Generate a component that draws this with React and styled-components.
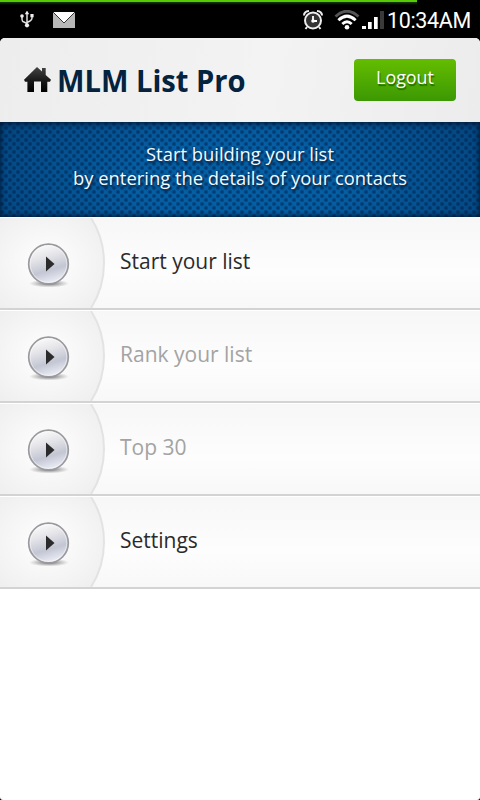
import React from 'react';
import styled, { createGlobalStyle } from 'styled-components';

const GlobalStyle = createGlobalStyle`
  * {
    box-sizing: border-box;
  }
  body {
    margin: 0;
    background: #000;
    font-family: "Open Sans", "Noto Sans", sans-serif;
  }
`;

const Phone = styled.div`
  width: 480px;
  height: 800px;
  display: flex;
  flex-direction: column;
  background: #000;
  overflow: hidden;
`;

// barra de estado
const Progress = styled.div`
  width: 417px;
  height: 5px;
  background: linear-gradient(#57cb05 0 2px, #173d00 2px, #000 5px);
`;

const StatusBar = styled.div`
  height: 33px;
  display: flex;
  align-items: center;
  padding: 0 9px 3px 19px;
  color: #fff;
`;

const StatusSpace = styled.div`
  flex: 1;
`;

const StatusIcon = styled.svg`
  flex: none;
  margin-left: ${(props) => props.$left || 0}px;
`;

const Clock = styled.span`
  margin: 2px 0 0 3px;
  width: 84px;
  font-family: Roboto, sans-serif;
  font-size: 21.5px;
  line-height: 30px;
  letter-spacing: -0.35px;
  white-space: nowrap;
`;

const Screen = styled.main`
  flex: 1;
  border-radius: 5px 5px 3px 3px;
  background: #fff;
  overflow: hidden;
`;

const Header = styled.header`
  height: 84px;
  display: flex;
  align-items: center;
  padding: 0 24px 0 23px;
  background: linear-gradient(100deg, #ededed, #f3f3f4 55%, #ececec);
`;

// texto estrechado, con el ancho de una letra condensada
const Narrow = styled.span`
  display: block;
  white-space: nowrap;
  transform: scaleX(${(props) => props.$scale});
  transform-origin: ${(props) => props.$origin || 'left'} center;
`;

const Title = styled.h1`
  flex: 1;
  margin: 0 0 1px 5px;
  font-size: 31px;
  line-height: 40px;
  font-weight: 700;
  color: #03233f;
`;

const LogoutButton = styled.button`
  width: 102px;
  height: 42px;
  border: 0;
  border-radius: 4px;
  padding: 0 0 7px;
  background: linear-gradient(#64bd00, #3c9803);
  color: #fff;
  font-family: inherit;
  font-size: 19px;
  text-shadow: 1px 2px 1px #246800;
`;

const Banner = styled.section`
  height: 95px;
  padding-top: 20px;
  text-align: center;
  color: #f4faff;
  font-size: 18.4px;
  line-height: 24px;
  text-shadow: 1px 2px 2px #00203f;
  box-shadow: inset 0 2px 5px rgba(0, 22, 48, 0.8), inset 0 -2px 4px rgba(0, 22, 48, 0.65);
  background:
    radial-gradient(ellipse 62% 120% at 50% 60%, transparent 35%, rgba(0, 25, 62, 0.42) 100%),
    radial-gradient(circle at 2px 2px, rgba(0, 34, 78, 0.62) 0.6px, transparent 2.8px) 0 0 / 8px 8px,
    radial-gradient(circle at 6px 6px, rgba(0, 34, 78, 0.62) 0.6px, transparent 2.8px) 0 0 / 8px 8px,
    #055fa4;
`;

const BannerLine = styled.div`
  white-space: nowrap;
`;

const Menu = styled.nav`
  display: flex;
  flex-direction: column;
`;

const MenuRow = styled.div`
  height: 93px;
  display: flex;
  align-items: center;
  border-top: 1px solid #fff;
  border-bottom: 2px solid #d3d3d3;
  background: linear-gradient(#f7f7f7, #fdfdfd 60%, #f8f8f8);
`;

const Label = styled.div`
  margin-left: 15px;
  padding-bottom: 5px;
  font-size: 21px;
  line-height: 28px;
  color: ${(props) => (props.$disabled ? '#a3a3a3' : '#2a2a2a')};
`;

const HomeIcon = () => (
  <svg width="29" height="27" viewBox="0 0 29 27">
    <defs>
      <linearGradient id="home" x1="0" y1="0" x2="0" y2="1">
        <stop offset="0" stopColor="#444" />
        <stop offset=".6" stopColor="#151515" />
        <stop offset="1" stopColor="#000" />
      </linearGradient>
    </defs>
    <path
      d="M14 0 19 4.6V1h3.7v7L28 12.7l-1 2h-2.7V25H18V14.5h-7V25H4.4V14.7H2l-1-2Z"
      fill="url(#home)"
    />
  </svg>
);

const UsbIcon = () => (
  <StatusIcon width="16" height="19" viewBox="0 0 16 19">
    <path
      d="M8 2v12M3 5v3.5q0 2 2 2.5l3 1.5M13 4.5V7q0 2-2 3l-3 1.5"
      fill="none" stroke="#ddd" strokeWidth="1.5"
    />
    <path d="m8-.5 2.2 3.8H5.8ZM11.4 3h3.2v3.2h-3.2Z" fill="#eee" />
    <circle cx="3" cy="5" r="1.8" fill="#eee" />
    <circle cx="8" cy="14.3" r="2.1" fill="#eee" />
  </StatusIcon>
);

const MailIcon = () => (
  <StatusIcon $left={18} width="22" height="16" viewBox="0 0 22 16">
    <path d="M0 0h22v16H0Z" fill="#b7b7b7" />
    <path d="M0 0h22L11 11Z" fill="#fff" />
    <path d="m0 0 11 11L22 0" fill="none" stroke="#333" strokeWidth="1" />
  </StatusIcon>
);

const AlarmIcon = () => (
  <StatusIcon width="22" height="22" viewBox="0 0 22 22">
    <circle cx="11" cy="11.5" r="8" fill="#333" stroke="#eee" strokeWidth="2" />
    <path d="M2 6.5q0-4 5-4.5M20 6.5q0-4-5-4.5" fill="none" stroke="#eee" strokeWidth="2" />
    <path d="m5 18-1.5 2M17 18l1.5 2" stroke="#eee" strokeWidth="2" />
    <path d="M11 7v5h4" fill="none" stroke="#fff" strokeWidth="1.8" />
    <circle cx="11" cy="12" r="1.8" fill="#fff" />
  </StatusIcon>
);

const WifiIcon = () => (
  <StatusIcon $left={10} width="26" height="20" viewBox="0 0 26 20">
    <g fill="none" strokeWidth="2.9">
      <path d="M1.5 6.5Q13-4 24.5 6.5" stroke="#555" />
      <path d="M4.4 10.3Q13 2 21.6 10.3M8.3 14Q13 9.5 17.7 14" stroke="#fff" />
    </g>
    <circle cx="13" cy="17.2" r="2.3" fill="#fff" />
  </StatusIcon>
);

const SignalIcon = () => (
  <StatusIcon $left={2} width="22" height="18" viewBox="0 0 22 18">
    <path d="M0 15h4v3H0ZM6 11h3.7v7H6ZM12 6h3.7v12H12Z" fill="#fff" />
    <path d="M18 0h4v18h-4Z" fill="#3a3a3a" />
  </StatusIcon>
);

// zona curva de la izquierda con el boton redondo
const PlayPanel = ({ id }) => (
  <svg width="105" height="90" viewBox="0 0 105 90">
    <defs>
      <radialGradient id={`panel${id}`} cx=".45" cy=".5" r=".65">
        <stop offset="0" stopColor="#fff" />
        <stop offset="1" stopColor="#efefef" />
      </radialGradient>
      <linearGradient id={`ball${id}`} x1=".35" y1="0" x2=".65" y2="1">
        <stop offset="0" stopColor="#fbfbfb" />
        <stop offset=".3" stopColor="#e6e6ea" />
        <stop offset=".65" stopColor="#c3c6d3" />
        <stop offset="1" stopColor="#f0f2fa" />
      </linearGradient>
      <radialGradient id={`shade${id}`}>
        <stop offset="0" stopColor="#666" />
        <stop offset="1" stopColor="#888" stopOpacity="0" />
      </radialGradient>
    </defs>
    <path d="M0 0h91q13 20 13 45T91 90H0Z" fill={`url(#panel${id})`} />
    <path d="M91 0q13 20 13 45T91 90" fill="none" stroke="#e3e3e3" strokeWidth="2" />
    <ellipse cx="49" cy="65.5" rx="20" ry="4" fill={`url(#shade${id})`} />
    <circle cx="48.5" cy="46" r="19.8" fill={`url(#ball${id})`} stroke="#9a9a9e" strokeWidth="1.7" />
    <circle cx="48.5" cy="46" r="18.3" fill="none" stroke="#fff" strokeOpacity=".45" />
    <path d="M46 38.5 54.5 46 46 53.5Z" fill="#2b2b2b" />
  </svg>
);

const items = [
  { text: 'Start your list', disabled: false },
  { text: 'Rank your list', disabled: true },
  { text: 'Top 30', disabled: true },
  { text: 'Settings', disabled: false },
];

function App() {
  return (
    <Phone>
      <GlobalStyle />
      <Progress />
      <StatusBar>
        <UsbIcon />
        <MailIcon />
        <StatusSpace />
        <AlarmIcon />
        <WifiIcon />
        <SignalIcon />
        <Clock>10:34AM</Clock>
      </StatusBar>
      <Screen>
        <Header>
          <HomeIcon />
          <Title>
            <Narrow $scale={0.94}>MLM List Pro</Narrow>
          </Title>
          <LogoutButton>
            <Narrow $scale={0.94} $origin="center">Logout</Narrow>
          </LogoutButton>
        </Header>
        <Banner>
          <BannerLine>Start building your list</BannerLine>
          <BannerLine>by entering the details of your contacts</BannerLine>
        </Banner>
        <Menu>
          {items.map((item, i) => (
            <MenuRow key={item.text}>
              <PlayPanel id={i} />
              <Label $disabled={item.disabled}>{item.text}</Label>
            </MenuRow>
          ))}
        </Menu>
      </Screen>
    </Phone>
  );
}

export default App;
